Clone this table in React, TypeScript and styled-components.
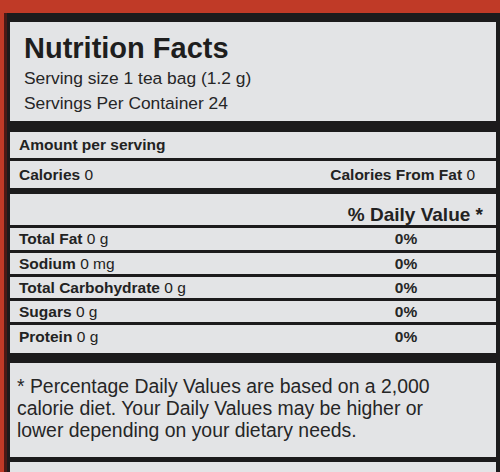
import React from "react";
import styled, { createGlobalStyle } from "styled-components";

const Global = createGlobalStyle`
  html, body { margin: 0; padding: 0; overflow: hidden; }
  body { background: #c03a27; font-family: "Liberation Sans", Arial, sans-serif; color: #222; }
`;

const Page = styled.div`
  width: 500px;
  height: 472px;
  overflow: hidden;
  background: #c03a27;
  padding: 13px 0 0 4px;
  box-sizing: border-box;
`;

const Frame = styled.div`
  background: #1c1b1c;
  border-left: 3px solid #4a1a16;
  height: 100%;
  padding: 9px 4px 0 3px;
  box-sizing: border-box;
  display: flex;
  flex-direction: column;
`;

const Block = styled.div<{ $gap?: number }>`
  background: #e3e4e6;
  margin-bottom: ${(p) => p.$gap ?? 0}px;
`;

const Header = styled(Block)`
  padding: 10px 0 5px 14px;
  height: 99px;
  box-sizing: border-box;
`;

const Title = styled.div`
  font-size: 29px;
  font-weight: 700;
  line-height: 32px;
  margin-bottom: 2px;
  color: #1e1e1e;
`;

const Sub = styled.div`
  font-size: 17.4px;
  line-height: 25px;
  color: #262626;
`;

const Rows = styled.div`
  display: flex;
  flex-direction: column;
  gap: 3px;
  margin-bottom: 10px;
`;

const Row = styled.div<{ $h: number; $thick?: boolean; $align?: string; $pt?: number }>`
  background: #e3e4e6;
  height: ${(p) => p.$h}px;
  display: flex;
  align-items: ${(p) => p.$align ?? "center"};
  padding: ${(p) => p.$pt ?? 0}px 0 0 9px;
  box-sizing: border-box;
  font-size: 15.5px;
  margin-top: ${(p) => (p.$thick ? 3 : 0)}px;
`;

const Label = styled.span`
  flex: 1;
  font-weight: 700;
  color: #222;
  & > em {
    font-style: normal;
    font-weight: 400;
  }
`;

const Right = styled.span<{ $pr: number; $size?: number }>`
  margin-left: auto;
  padding-right: ${(p) => p.$pr}px;
  font-weight: 700;
  font-size: ${(p) => p.$size ?? 15.5}px;
  color: #222;
  & > em {
    font-style: normal;
    font-weight: 400;
  }
`;

const Pct = styled.span`
  width: 100px;
  margin-right: 40px;
  text-align: center;
  font-weight: 700;
  color: #262626;
`;

const Foot = styled(Block)`
  padding: 12px 0 0 7px;
  height: 94px;
  box-sizing: border-box;
  font-size: 19.4px;
  line-height: 22px;
  color: #262626;
  margin-bottom: 5px;
`;

const Tail = styled(Block)`
  flex: 1;
`;

const nutrients = [
  { name: "Total Fat", amt: " 0 g", h: 22 },
  { name: "Sodium", amt: "0 mg", h: 21 },
  { name: "Total Carbohydrate", amt: "0 g", h: 21 },
  { name: "Sugars", amt: "0 g", h: 21 },
  { name: "Protein", amt: "0 g", h: 28 },
];

export default function App() {
  return (
    <>
      <Global />
      <Page>
        <Frame>
          <Header $gap={11}>
            <Title>Nutrition Facts</Title>
            <Sub>Serving size 1 tea bag (1.2 g)</Sub>
            <Sub>Servings Per Container 24</Sub>
          </Header>
          <Rows>
            <Row $h={26}>
              <Label>Amount per serving</Label>
            </Row>
            <Row $h={27}>
              <Label>
                Calories <em>0</em>
              </Label>
              <Right $pr={21}>
                Calories From Fat <em>0</em>
              </Right>
            </Row>
            <Row $h={31} $thick $align="flex-start" $pt={10}>
              <Right $pr={13} $size={19}>
                % Daily Value *
              </Right>
            </Row>
            {nutrients.map((n) => (
              <Row key={n.name} $h={n.h} $align={n.h > 24 ? "flex-start" : "center"} $pt={n.h > 24 ? 3 : 0}>
                <Label>
                  {n.name} <em>{n.amt}</em>
                </Label>
                <Pct>0%</Pct>
              </Row>
            ))}
          </Rows>
          <Foot>
            * Percentage Daily Values are based on a 2,000
            <br />
            calorie diet. Your Daily Values may be higher or
            <br />
            lower depending on your dietary needs.
          </Foot>
          <Tail />
        </Frame>
      </Page>
    </>
  );
}
